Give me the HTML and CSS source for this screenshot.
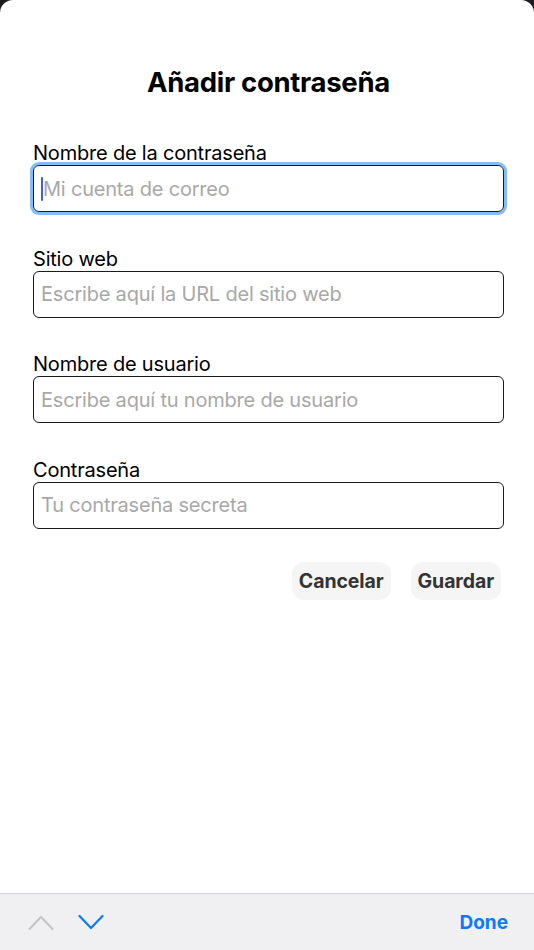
FILE: index.html
```html
<!DOCTYPE html>
<html lang="es">
<head>
<meta charset="utf-8">
<title>Añadir contraseña</title>
<link rel="stylesheet" href="styles.css">
</head>
<body>
<div class="sheet">
  <main class="content">
    <h1 class="title">Añadir contraseña</h1>
    <form class="form">
      <div class="group">
        <label class="label">Nombre de la contraseña</label>
        <div class="field focused"><span class="caret"></span><span class="placeholder">Mi cuenta de correo</span></div>
      </div>
      <div class="group">
        <label class="label">Sitio web</label>
        <div class="field"><span class="placeholder">Escribe aquí la URL del sitio web</span></div>
      </div>
      <div class="group">
        <label class="label">Nombre de usuario</label>
        <div class="field"><span class="placeholder">Escribe aquí tu nombre de usuario</span></div>
      </div>
      <div class="group">
        <label class="label">Contraseña</label>
        <div class="field"><span class="placeholder">Tu contraseña secreta</span></div>
      </div>
      <div class="actions">
        <button type="button" class="btn">Cancelar</button>
        <button type="button" class="btn">Guardar</button>
      </div>
    </form>
  </main>
  <div class="toolbar">
    <div class="arrows">
      <svg class="chev up" width="26" height="18" viewBox="0 0 26 18"><polyline points="1.5,16 13,4 24.5,16" fill="none" stroke="#c4c4c6" stroke-width="2" stroke-linecap="round" stroke-linejoin="round"/></svg>
      <svg class="chev down" width="26" height="18" viewBox="0 0 26 18"><polyline points="1.5,3 13,15 24.5,3" fill="none" stroke="#0a7aff" stroke-width="2.2" stroke-linecap="round" stroke-linejoin="round"/></svg>
    </div>
    <span class="done">Done</span>
  </div>
</div>
</body>
</html>
```
FILE: styles.css
```css
html, body {
  margin: 0;
  padding: 0;
  background: #1c1c1e;
}
body {
  font-family: Inter, "Noto Sans", "Liberation Sans", sans-serif;
  color: #000;
}
.sheet {
  background: #fff;
  min-height: 950px;
  border-radius: 13px 13px 0 0;
  display: flex;
  flex-direction: column;
}
.content {
  flex: 1;
  padding: 0 30px 0 33px;
}
.title {
  margin: 64px 0 0;
  text-align: center;
  font-size: 27.5px;
  line-height: 36px;
  font-weight: 700;
  letter-spacing: -0.3px;
}
.form {
  margin-top: 41px;
  display: flex;
  flex-direction: column;
  gap: 34.6px;
}
.group {
  display: flex;
  flex-direction: column;
}
.label {
  font-size: 20px;
  line-height: 24px;
  letter-spacing: -0.2px;
}
.field {
  box-sizing: border-box;
  height: 47px;
  border: 1.5px solid #1b1b1b;
  border-radius: 6px;
  display: flex;
  align-items: center;
  padding: 0 7px;
}
.field.focused {
  box-shadow: 0 0 0 3px #84bcff;
}
.caret {
  width: 2px;
  height: 24px;
  background: #3c5cf6;
  border-radius: 1px;
}
.placeholder {
  font-size: 20px;
  color: #a8a8a8;
  letter-spacing: -0.2px;
}
.actions {
  display: flex;
  justify-content: flex-end;
  gap: 20px;
  margin-top: -1px;
  padding-right: 3px;
}
.btn {
  font-family: inherit;
  font-size: 19.5px;
  font-weight: 700;
  color: #333;
  background: #f5f5f5;
  border: none;
  border-radius: 12px;
  height: 38px;
  padding: 0 7px;
  letter-spacing: -0.1px;
}
.toolbar {
  box-sizing: border-box;
  height: 57px;
  background: #f0f0f3;
  border-top: 1px solid #d4d4d8;
  display: flex;
  align-items: center;
  justify-content: space-between;
  padding: 0 26px 0 28px;
}
.arrows {
  display: flex;
  gap: 24px;
  align-items: center;
}
.done {
  font-size: 19px;
  font-weight: 700;
  color: #0a7aff;
}
```
